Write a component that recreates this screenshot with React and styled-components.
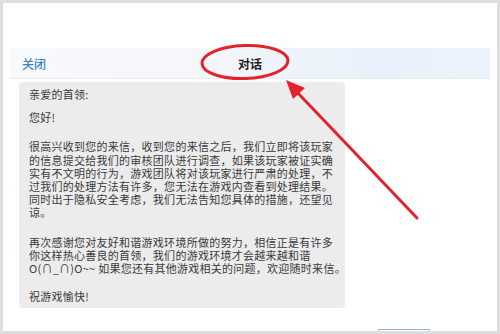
import React from "react";
import styled, { createGlobalStyle } from "styled-components";

const Global = createGlobalStyle`
  html, body { margin: 0; padding: 0; }
  body {
    width: 500px; height: 334px; overflow: hidden;
    background: #dedede;
    font-family: "Noto Sans CJK SC", "Noto Sans", sans-serif;
  }
`;

const Stage = styled.div`
  position: relative;
  width: 500px;
  height: 334px;
  padding: 3px 3px 0 3px;
  box-sizing: border-box;
`;

const Panel = styled.div`
  background: #ffffff;
  height: 328px;
  display: flex;
  flex-direction: column;
  padding-top: 45px;
  box-sizing: border-box;
`;

const Header = styled.div`
  margin: 0 7px;
  height: 30px;
  display: grid;
  grid-template-columns: 1fr auto 1fr;
  align-items: center;
  padding: 0 12px;
  background: linear-gradient(90deg, #f8f9fb 0%, #f4f6f9 40%, #e8f1fb 75%, #eaf2fb 100%);
  border-bottom: 1px solid #ebebeb;
  font-size: 12px;
`;

const Close = styled.span`
  color: #3a82c5;
  font-weight: 500;
  justify-self: start;
`;

const Title = styled.span`
  color: #1e1e1e;
  font-weight: 600;
`;

const Bubble = styled.div`
  margin: 3px 0 0 16px;
  width: 326px;
  padding: 6px 10px 5px 10px;
  box-sizing: border-box;
  background: #ececec;
  border-radius: 4px;
  color: #3a3a3a;
  font-size: 11px;
  letter-spacing: 0.26px;
  line-height: 13.2px;
`;

const Para = styled.div`
  margin-top: ${(p) => p.$gap || 0}px;
`;

const Line = styled.div`
  white-space: nowrap;
`;

const Footer = styled.div`
  margin-top: auto;
  height: 3px;
  display: flex;
  justify-content: flex-end;
  align-items: flex-end;
`;

const BottomButton = styled.div`
  width: 50px;
  height: 1px;
  margin-right: 67px;
  border-top: 1px solid #8fb0dc;
  border-left: 1px solid #b7c9e4;
  border-right: 1px solid #b7c9e4;
`;

const Overlay = styled.svg`
  position: absolute;
  top: 0;
  left: 0;
  pointer-events: none;
`;

const paragraphs = [
  { gap: 0, lines: ["亲爱的首领:"] },
  { gap: 10, lines: ["您好!"] },
  {
    gap: 16,
    lines: [
      "很高兴收到您的来信，收到您的来信之后，我们立即将该玩家",
      "的信息提交给我们的审核团队进行调查，如果该玩家被证实确",
      "实有不文明的行为，游戏团队将对该玩家进行严肃的处理，不",
      "过我们的处理方法有许多，您无法在游戏内查看到处理结果。",
      "同时出于隐私安全考虑，我们无法告知您具体的措施，还望见",
      "谅。",
    ],
  },
  {
    gap: 16,
    lines: [
      "再次感谢您对友好和谐游戏环境所做的努力，相信正是有许多",
      "你这样热心善良的首领，我们的游戏环境才会越来越和谐",
      "O(∩_∩)O~~ 如果您还有其他游戏相关的问题，欢迎随时来信。",
    ],
  },
  { gap: 15, lines: ["祝游戏愉快!"] },
];

export default function App() {
  return (
    <>
      <Global />
      <Stage>
        <Panel>
          <Header>
            <Close>关闭</Close>
            <Title>对话</Title>
            <span />
          </Header>
          <Bubble>
            {paragraphs.map((p, i) => (
              <Para key={i} $gap={p.gap}>
                {p.lines.map((l, j) => (
                  <Line key={j}>{l}</Line>
                ))}
              </Para>
            ))}
          </Bubble>
          <Footer>
            <BottomButton />
          </Footer>
        </Panel>
        <Overlay width="500" height="334" viewBox="0 0 500 334">
          <ellipse
            cx="245"
            cy="62"
            rx="43"
            ry="16.5"
            fill="none"
            stroke="#e2232c"
            strokeWidth="3"
            transform="rotate(-2 245 62)"
          />
          <line x1="417" y1="218" x2="296" y2="91" stroke="#e2232c" strokeWidth="3" strokeLinecap="round" />
          <polygon points="286,80 305,88 293,99" fill="#e2232c" />
        </Overlay>
      </Stage>
    </>
  );
}
